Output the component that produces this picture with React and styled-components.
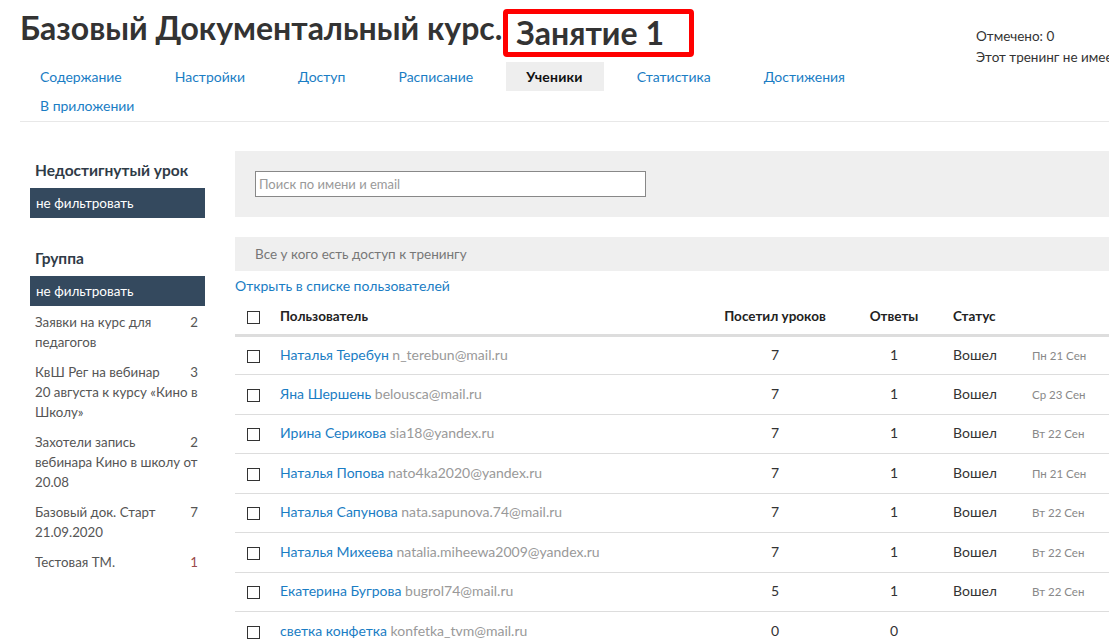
import styled, { createGlobalStyle, css } from 'styled-components';

const GlobalStyle = createGlobalStyle`
	body {
		margin: 0;
		font-family: Lato, 'Open Sans', sans-serif;
		color: #333;
		background: #fff;
		overflow: hidden;
	}
`;

const Page = styled.div`
	width: 1180px;
	padding: 0 0 0 20px;
	box-sizing: border-box;
`;
const Header = styled.div`
	display: flex;
	height: 62px;
`;
const TitleBlock = styled.div`
	width: 956px;
	flex-shrink: 0;
	padding-top: 9px;
`;
const Title = styled.h1`
	margin: 0;
	font-size: 32px;
	line-height: 38px;
	font-weight: 700;
	color: #333;
	white-space: nowrap;
	display: flex;
	align-items: flex-start;
`;
const Marked = styled.span`
	display: inline-block;
	border: 5px solid #ff0000;
	border-radius: 4px;
	padding: 0 25px 0 8px;
	margin-left: 1px;
`;
const Info = styled.div`
	padding-top: 26px;
	font-size: 13.5px;
	line-height: 21px;
	white-space: nowrap;
	color: #333;
`;
const Nav = styled.div`
	border-bottom: 1px solid #e8e8e8;
	padding-bottom: 1px;
	width: 1160px;
`;
const NavInner = styled.div`
	display: flex;
	flex-wrap: wrap;
	width: 940px;
	column-gap: 13px;
`;
const Tab = styled.a`
	display: block;
	height: 29px;
	line-height: 29px;
	padding: 0 20px;
	font-size: 14px;
	color: #1a7dc4;
	text-decoration: none;
	${(props) =>
		props.active &&
		css`
			background: #eeeeee;
			color: #111;
			font-weight: 700;
			padding: 0 21px 0 20px;
			letter-spacing: 0.2px;
		`}
`;
const Body = styled.div`
	display: flex;
	gap: 30px;
	padding-left: 10px;
`;
const Sidebar = styled.div`
	width: 175px;
	flex-shrink: 0;
	padding-top: 38px;
`;
const SideTitle = styled.div`
	font-size: 15.5px;
	font-weight: 700;
	line-height: 20px;
	padding-left: 5px;
	margin-bottom: 8px;
	color: #2f3b47;
	${(props) =>
		props.spaced &&
		css`
			margin-top: 30px;
		`}
`;
const FilterBox = styled.div`
	background: #34495e;
	color: #fff;
	height: 30px;
	line-height: 30px;
	padding-left: 6px;
	font-size: 13.5px;
`;
const GroupList = styled.div`
	margin-top: 6px;
	display: flex;
	flex-direction: column;
	gap: 10px;
`;
const GroupItem = styled.div`
	padding: 0 0 0 5px;
	font-size: 13.3px;
	line-height: 20px;
	color: #555;
`;
const Count = styled.span`
	float: right;
	margin: 0 7px 0 16px;
	color: ${(props) => (props.red ? '#9a4a4a' : '#555')};
`;
const Main = styled.div`
	flex: 1;
	padding-top: 29px;
`;
const SearchPanel = styled.div`
	background: #efefef;
	height: 66px;
	padding: 20px 0 0 20px;
	box-sizing: border-box;
`;
const SearchInput = styled.input`
	width: 391px;
	height: 26px;
	box-sizing: border-box;
	border: 1px solid #888;
	padding: 0 3px;
	font-family: inherit;
	font-size: 13px;
	&::placeholder {
		color: #999;
	}
`;
const AccessBar = styled.div`
	margin-top: 20px;
	background: #efefef;
	height: 34px;
	line-height: 34px;
	padding-left: 20px;
	font-size: 13.5px;
	color: #777;
`;
const OpenLink = styled.a`
	display: block;
	margin-top: 6px;
	font-size: 14px;
	line-height: 18px;
	color: #1a7dc4;
	text-decoration: none;
`;
const Table = styled.table`
	width: 100%;
	border-collapse: collapse;
	table-layout: fixed;
	font-size: 14px;
`;
const Th = styled.th`
	box-sizing: border-box;
	height: 40px;
	padding: 4px 0 0;
	font-weight: 700;
	font-size: 13.5px;
	color: #222;
	text-align: ${(props) => props.align || 'left'};
	border-bottom: 3px solid #dddddd;
	padding-left: ${(props) => props.pl || 0}px;
`;
const Td = styled.td`
	box-sizing: border-box;
	height: 39.5px;
	padding: 0 0 2px;
	padding-left: ${(props) => props.pl || 0}px;
	border-bottom: 1px solid #dddddd;
	text-align: ${(props) => props.align || 'left'};
	color: #333;
`;
const Check = styled.span`
	display: inline-block;
	width: 13px;
	height: 13px;
	border: 1.5px solid #333;
	box-sizing: border-box;
	vertical-align: middle;
`;
const Name = styled.a`
	color: #1a7dc4;
	text-decoration: none;
`;
const Email = styled.span`
	color: #999;
`;
const DateText = styled.span`
	font-size: 11.5px;
	color: #888;
`;

const tabs = ['Содержание', 'Настройки', 'Доступ', 'Расписание', 'Ученики', 'Статистика', 'Достижения', 'В приложении'];

const groups = [
	{ name: 'Заявки на курс для педагогов', count: 2 },
	{ name: 'КвШ Рег на вебинар 20 августа к курсу «Кино в Школу»', count: 3 },
	{ name: 'Захотели запись вебинара Кино в школу от 20.08', count: 2 },
	{ name: 'Базовый док. Старт 21.09.2020', count: 7 },
	{ name: 'Тестовая ТМ.', count: 1, red: true },
];

const users = [
	['Наталья Теребун', 'n_terebun@mail.ru', 7, 1, 'Вошел', 'Пн 21 Сен'],
	['Яна Шершень', 'belousca@mail.ru', 7, 1, 'Вошел', 'Ср 23 Сен'],
	['Ирина Серикова', 'sia18@yandex.ru', 7, 1, 'Вошел', 'Вт 22 Сен'],
	['Наталья Попова', 'nato4ka2020@yandex.ru', 7, 1, 'Вошел', 'Пн 21 Сен'],
	['Наталья Сапунова', 'nata.sapunova.74@mail.ru', 7, 1, 'Вошел', 'Вт 22 Сен'],
	['Наталья Михеева', 'natalia.miheewa2009@yandex.ru', 7, 1, 'Вошел', 'Вт 22 Сен'],
	['Екатерина Бугрова', 'bugrol74@mail.ru', 5, 1, 'Вошел', 'Вт 22 Сен'],
	['светка конфетка', 'konfetka_tvm@mail.ru', 0, 0, '', ''],
];

const App = () => {
	return (
		<Page>
			<GlobalStyle />
			<Header>
				<TitleBlock>
					<Title>
						Базовый Документальный курс.<Marked>Занятие 1</Marked>
					</Title>
				</TitleBlock>
				<Info>
					<div>Отмечено: 0</div>
					<div>Этот тренинг не имеет расписания</div>
				</Info>
			</Header>
			<Nav>
				<NavInner>
					{tabs.map((t) => (
						<Tab key={t} active={t === 'Ученики'}>
							{t}
						</Tab>
					))}
				</NavInner>
			</Nav>
			<Body>
				<Sidebar>
					<SideTitle>Недостигнутый урок</SideTitle>
					<FilterBox>не фильтровать</FilterBox>
					<SideTitle spaced>Группа</SideTitle>
					<FilterBox>не фильтровать</FilterBox>
					<GroupList>
						{groups.map((g) => (
							<GroupItem key={g.name}>
								<Count red={g.red}>{g.count}</Count>
								{g.name}
							</GroupItem>
						))}
					</GroupList>
				</Sidebar>
				<Main>
					<SearchPanel>
						<SearchInput placeholder="Поиск по имени и email" />
					</SearchPanel>
					<AccessBar>Все у кого есть доступ к тренингу</AccessBar>
					<OpenLink>Открыть в списке пользователей</OpenLink>
					<Table>
						<colgroup>
							<col style={{ width: 35 }} />
							<col style={{ width: 440 }} />
							<col style={{ width: 130 }} />
							<col style={{ width: 108 }} />
							<col style={{ width: 84 }} />
							<col />
						</colgroup>
						<thead>
							<tr>
								<Th pl={12}>
									<Check />
								</Th>
								<Th pl={10}>Пользователь</Th>
								<Th align="center">Посетил уроков</Th>
								<Th align="center">Ответы</Th>
								<Th pl={5}>Статус</Th>
								<Th />
							</tr>
						</thead>
						<tbody>
							{users.map((u) => (
								<tr key={u[1]}>
									<Td pl={12}>
										<Check />
									</Td>
									<Td pl={10}>
										<Name>{u[0]}</Name> <Email>{u[1]}</Email>
									</Td>
									<Td align="center">{u[2]}</Td>
									<Td align="center">{u[3]}</Td>
									<Td pl={5}>{u[4]}</Td>
									<Td>
										<DateText>{u[5]}</DateText>
									</Td>
								</tr>
							))}
						</tbody>
					</Table>
				</Main>
			</Body>
		</Page>
	);
};

export default App;
